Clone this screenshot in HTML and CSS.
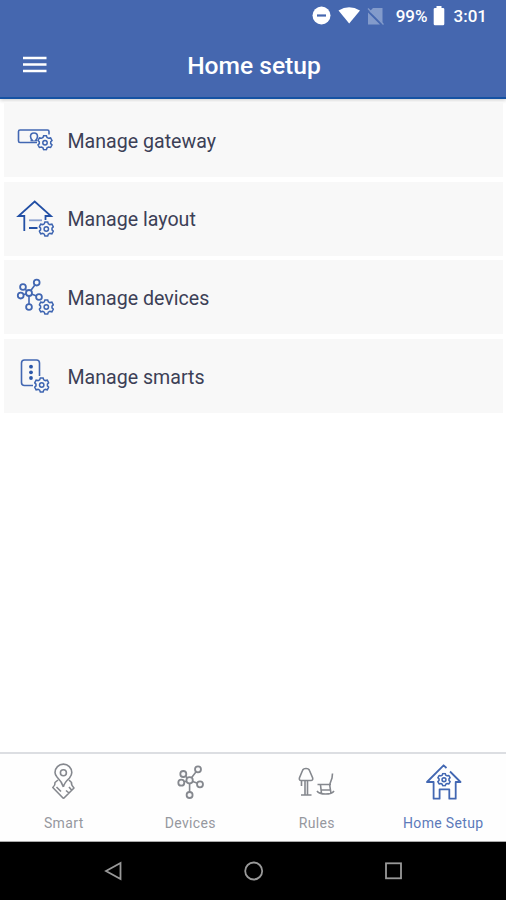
FILE: index.html
```html
<!DOCTYPE html>
<html lang="en">
<head>
<meta charset="utf-8">
<title>Home setup</title>
<link rel="stylesheet" href="styles.css">
</head>
<body>
<svg class="defs" width="0" height="0">
  <symbol id="gear" viewBox="-8 -8 16 16">
    <path d="M-2-5.2-1.4-7H1.4L2-5.2 3.6-4.400 5.600-4.800 7-2.200 5.700-.9V.9L7 2.200 5.600 4.800 3.600 4.400 2 5.200 1.400 7H-1.400L-2 5.200-3.600 4.400-5.600 4.800-7 2.200-5.700.9V-.9L-7-2.200-5.600-4.800-3.600-4.400Z"/>
    <circle r="2.200"/>
  </symbol>
</svg>
<div class="screen">
  <header class="header">
    <div class="status">
      <svg class="status-icons" width="76" height="22" viewBox="0 0 76 22">
        <circle cx="9.500" cy="10.500" r="9" fill="#fff"/><path d="M5 10.500h9" stroke="#4567af" stroke-width="2.200"/>
        <path d="M26.500 5.500Q37-1 48 5.500L37.200 18.500Z" fill="#fff"/>
        <path d="M61 3h9.500v15L57.500 6.500ZM56 7.500 68 19.500H56Z" fill="#839bcb"/><path d="M56 3.500 71.500 19.500" stroke="#839bcb" stroke-width="1.300"/>
      </svg>
      <span class="battery">99%</span>
      <svg class="battery-icon" width="12" height="20" viewBox="0 0 12 20"><path d="M3.500 0h5v2H10q1.300 0 1.300 1v15q0 1.300-1.300 1.300H2Q.7 19.300.7 18V3q0-1 1.300-1h1.500Z" fill="#fff"/></svg>
      <span class="clock">3:01</span>
    </div>
    <div class="titlebar">
      <svg class="menu" width="24" height="18" viewBox="0 0 24 18"><path d="M0 2h23.500M0 8.500h23.500M0 15h23.500" stroke="#fff" stroke-width="2.600"/></svg>
      <h1 class="title">Home setup</h1>
    </div>
  </header>
  <main class="list">
    <div class="row">
      <svg class="icon light" viewBox="0 0 40 40"><path d="M22 22.500H5Q3.500 22.500 3.500 21V11.500Q3.500 10 5 10H32.500Q34 10 34 11.500V14.500M15.500 20.500H17.500Q15.500 18.500 15.500 16.500Q15.500 13 19 13T22.500 16.500Q22.500 18.500 20.500 20.500H22"/><use href="#gear" x="22" y="14.700" width="16" height="16"/></svg>
      <span>Manage gateway</span>
    </div>
    <div class="row">
      <svg class="icon" viewBox="0 0 40 40"><path d="M9.300 32V17H3.500L19.700 2.500 36 17H30.500V21M14 29H22.500"/><path class="soft" d="M14 21.300H27"/><use href="#gear" x="23.300" y="22" width="16" height="16"/></svg>
      <span>Manage layout</span>
    </div>
    <div class="row">
      <svg class="icon light" viewBox="0 0 40 40"><path d="M14 16 8 10M14 16 5.700 18.600M14 16 21.700 5.600M14 16 24 20M14 16V30"/><g class="nodes"><circle cx="14" cy="16" r="3"/><circle cx="8" cy="10" r="2.900"/><circle cx="5.700" cy="18.600" r="2.900"/><circle cx="21.700" cy="5.600" r="2.900"/><circle cx="24" cy="20" r="2.900"/><circle cx="14" cy="30" r="2.900"/></g><use href="#gear" x="23.300" y="22" width="16" height="16"/></svg>
      <span>Manage devices</span>
    </div>
    <div class="row">
      <svg class="icon light" viewBox="0 0 40 40"><path d="M18 29.500H9.500Q6.500 29.500 6.500 26.500V7Q6.500 4 9.500 4H21.500Q24.500 4 24.500 7V20"/><g class="dots"><circle cx="16" cy="10.700" r="1.900"/><circle cx="16" cy="16.300" r="1.900"/><circle cx="16" cy="22" r="1.900"/></g><use href="#gear" x="18.700" y="21" width="16" height="16"/></svg>
      <span>Manage smarts</span>
    </div>
  </main>
  <nav class="tabs">
    <div class="tab">
      <svg class="tab-icon" viewBox="0 0 44 44"><path d="M22.400 27Q21 22 16 17Q14 14.500 14 12.500A8.400 8.400 0 0 1 30.800 12.500Q30.800 15 28.500 18Q23 23 22.400 27M17 20 14 22.500Q14.500 25 11.800 27.500L21.500 37.500Q22.500 38.700 23.500 37.500L33 28Q30 25 30.500 22.500L28 20M15.500 27 20 31.500M25 30.500 28 33M28 27 30.500 30"/><circle cx="22.400" cy="12.700" r="3"/></svg>
      <span>Smart</span>
    </div>
    <div class="tab">
      <svg class="tab-icon" viewBox="0 0 44 44"><path d="M21.600 20.300 15.300 14M21.600 20.300 13.300 22.700M21.600 20.300 30 9.300M21.600 20.300 32 24.300M21.600 20.300V35"/><g class="nodes"><circle cx="21.600" cy="20.300" r="3.200"/><circle cx="15.300" cy="14" r="3"/><circle cx="13.300" cy="22.700" r="3"/><circle cx="30" cy="9.300" r="3"/><circle cx="32" cy="24.300" r="3"/><circle cx="21.600" cy="35" r="3"/></g></svg>
      <span>Devices</span>
    </div>
    <div class="tab">
      <svg class="tab-icon" viewBox="0 0 44 44"><path d="M8.500 10.500Q9 8.500 12 8.500T15.500 10.500L18.700 18Q19 20.500 17 20.500H7Q5 20.500 5.400 18ZM11 20.500V34.500M13.500 20.500V34.500M7 35H17.500M7.500 21V26M38.500 13.500 38 18 35.700 24.500M23.500 24.500H37M26.500 25 27.500 33.500M35.700 25 37 33.500M27 30H36.500M23 31Q25 34 31.500 34T40 31"/></svg>
      <span>Rules</span>
    </div>
    <div class="tab active">
      <svg class="tab-icon" viewBox="0 0 44 44"><path d="M25.500 8 22.600 5.300 6 22H12.600V38.700H18.600V29.300H28.300V38.700H34.700V22H39.500L29 11.500"/><use href="#gear" x="16" y="12.700" width="14" height="14"/></svg>
      <span>Home Setup</span>
    </div>
  </nav>
  <footer class="system">
    <svg width="20" height="20" viewBox="0 0 20 20"><path d="M2 10 16.500 2V18Z"/></svg>
    <svg width="20" height="20" viewBox="0 0 20 20"><circle cx="9.700" cy="10" r="8.500"/></svg>
    <svg width="20" height="20" viewBox="0 0 20 20"><rect x="2" y="2.300" width="15" height="15"/></svg>
  </footer>
</div>
</body>
</html>
```
FILE: styles.css
```css
* { box-sizing: border-box; }
body { margin: 0; font-family: Roboto, "Liberation Sans", sans-serif; background: #fff; }
.defs { display: block; }
.screen { width: 506px; height: 900px; display: flex; flex-direction: column; overflow: hidden; }
.header { height: 99px; flex: none; background: #4567af; border-bottom: 2px solid #1552a3; color: #fff; box-shadow: 0 1px 4px rgba(0, 0, 0, .22); }
.status { height: 32px; display: flex; align-items: center; justify-content: flex-end; padding-right: 19px; font-size: 17px; font-weight: 500; }
.status-icons { margin-right: 8px; }
.battery-icon { margin: 0 9px 0 5px; }
.titlebar { height: 66px; display: grid; grid-template-columns: 60px 1fr 60px; align-items: center; }
.menu { margin-left: 23px; }
.title { margin: 1px 0 0 2px; font-size: 24.600px; font-weight: 500; line-height: 32px; text-align: center; }
.list { flex: 1; padding: 4px 3px 0 4px; display: flex; flex-direction: column; gap: 4.700px; }
.row { height: 74px; flex: none; display: flex; align-items: center; padding-left: 11px; background: #f8f8f8; color: #3c4056; font-size: 19.600px; }
.row span { padding-top: 2.500px; }
.icon { width: 40px; height: 40px; margin-right: 12.500px; fill: none; stroke: #2350a5; stroke-width: 1.800; }
.light { stroke: #4267b2; stroke-width: 1.600; }
.icon use { stroke-width: 1.500; stroke: #3e65b1; }
.soft { stroke: #8ba1cf; }
.nodes { fill: #f9f9fa; stroke-width: 1.800; }
.dots { fill: #2955a8; stroke: none; }
.tabs { height: 90px; flex: none; display: grid; grid-template-columns: repeat(4, 1fr); border-top: 2px solid #dcdee2; border-bottom: 1px solid #aaa; background: #fefefe; }
.tab { display: flex; flex-direction: column; align-items: center; padding-top: 6px; color: #96989e; font-size: 14px; letter-spacing: .35px; line-height: 18px; }
.tab span { padding-left: 1px; }
.tab-icon { width: 44px; height: 44px; margin-bottom: 10px; fill: none; stroke: #85888e; stroke-width: 1.600; stroke-linejoin: round; }
.active { color: #5c7aba; }
.active .tab-icon { stroke: #4267b2; stroke-width: 1.800; }
.system { height: 58px; flex: none; background: #000; display: flex; align-items: center; justify-content: space-between; padding: 0 102px 0 104px; }
.system svg { fill: none; stroke: #999; stroke-width: 1.800; }
```
